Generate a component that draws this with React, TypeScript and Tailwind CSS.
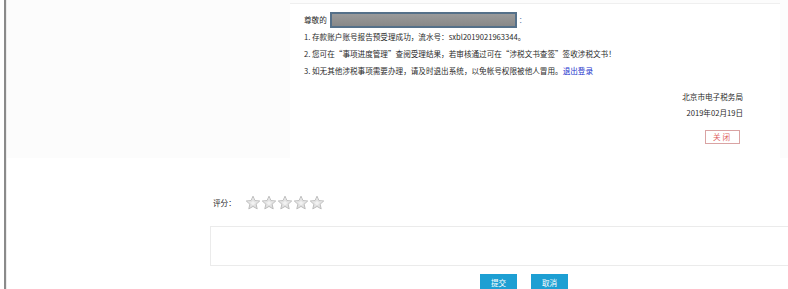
import React from "react";

const Star = () => (
  <svg width="16" height="16" viewBox="0 0 16 16">
    <defs>
      <linearGradient id="sg" x1="0" y1="0" x2="0" y2="1">
        <stop offset="0" stopColor="#ffffff" />
        <stop offset="1" stopColor="#dcdcdc" />
      </linearGradient>
    </defs>
    <path
      d="M8 1.2 L9.9 5.6 L14.7 6 L11.1 9.2 L12.2 13.9 L8 11.4 L3.8 13.9 L4.9 9.2 L1.3 6 L6.1 5.6 Z"
      fill="url(#sg)"
      stroke="#bdbdbd"
      strokeWidth="1"
      strokeLinejoin="round"
    />
    <path
      d="M8 4 L9 6.7 L11.8 7 L9.7 8.9 L10.3 11.5 L8 10.1 L5.7 11.5 L6.3 8.9 L4.2 7 L7 6.7 Z"
      fill="#f2f2f2"
      stroke="#d6d6d6"
      strokeWidth="0.6"
    />
  </svg>
);

export default function App() {
  const font = { fontFamily: '"Noto Sans CJK SC","Liberation Sans",sans-serif' };
  return (
    <div
      className="w-[788px] h-[289px] overflow-hidden bg-white flex text-[#2a2a2a] text-[7.6px]"
      style={font}
    >
      <div className="w-[4px] shrink-0 bg-white" />
      <div className="w-[2px] shrink-0 bg-[#8a8a8a]" />
      <div className="w-[1px] shrink-0 bg-[#ececec]" />
      <div className="flex-1 flex flex-col min-w-0">
        <div className="h-[158px] shrink-0 bg-[#fcfcfc] flex">
          <div className="ml-[283px] w-[490px] mt-[3px] bg-white border-t border-[#efefef] flex flex-col pl-[14px] pt-[8px]">
            <div className="flex items-center h-[16px]">
              <span>尊敬的</span>
              <div className="ml-[3px] w-[187px] h-[16px] border-2 border-[#557089] bg-gradient-to-b from-[#9a9a9a] to-[#888888]" />
              <span className="ml-[2px] text-[#5a7aa8]">：</span>
            </div>
            <div className="leading-[17px]">1. 存款账户账号报告预受理成功，流水号：sxbl2019021963344。</div>
            <div className="leading-[17px]">
              2. 您可在“事项进度管理”查阅受理结果，若审核通过可在“涉税文书查签”签收涉税文书！
            </div>
            <div className="leading-[17px]">
              3. 如无其他涉税事项需要办理，请及时退出系统，以免帐号权限被他人冒用。
              <span className="text-[#2233cc]">退出登录</span>
            </div>
            <div className="flex flex-col items-end pr-[37px]">
              <div className="mt-[10px] leading-[16px]">北京市电子税务局</div>
              <div className="leading-[16px]">2019年02月19日</div>
              <div className="mt-[9px] mr-[3px] w-[35px] h-[14px] border border-[#d9a3a3] text-[#e06060] flex items-center justify-center tracking-[2px]">
                关闭
              </div>
            </div>
          </div>
        </div>
        <div className="flex-1 bg-white flex flex-col">
          <div className="mt-[37px] ml-[206px] flex items-center h-[16px]">
            <span className="w-[32px]">评分：</span>
            <div className="flex">
              <Star />
              <Star />
              <Star />
              <Star />
              <Star />
            </div>
          </div>
          <div className="mt-[15px] ml-[203px] w-[700px] h-[40px] shrink-0 border border-[#ebebeb] bg-white" />
          <div className="mt-[8px] ml-[473px] flex gap-[14px]">
            <div className="w-[37px] h-[17px] bg-[#1d9fd3] text-white flex items-center justify-center">提交</div>
            <div className="w-[37px] h-[17px] bg-[#1d9fd3] text-white flex items-center justify-center">取消</div>
          </div>
        </div>
      </div>
    </div>
  );
}
